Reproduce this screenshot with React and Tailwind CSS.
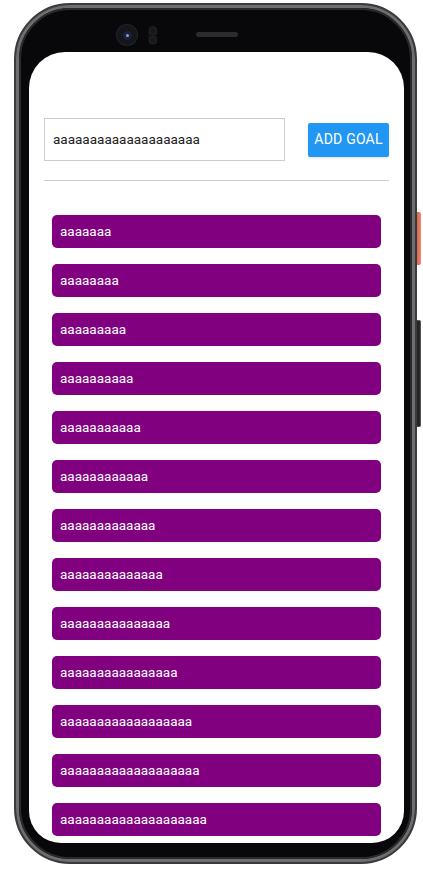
import React from "react";

const goals = [7, 8, 9, 10, 11, 12, 13, 14, 15, 16, 18, 19, 20].map((n, i) => ({ id: i, text: "a".repeat(n) }));

export default function App() {
  return (
    <div className="min-h-[876px] w-[423px] bg-white pl-[14px] pt-[3px] font-['Roboto','Liberation_Sans',sans-serif]">
      <div className="relative h-[861px] w-[403px]">
        {/* side buttons */}
        <div className="absolute left-[401px] top-[209px] h-[53px] w-[6px] rounded-r-[2px] bg-gradient-to-r from-[#c8553c] to-[#f08a6c]" />
        <div className="absolute left-[400px] top-[317px] h-[107px] w-[7px] rounded-r-[2px] border-y border-r border-[#555] bg-[#262628]" />

        <div className="relative h-full w-full rounded-[56px] border-2 border-[#3b3b3d] bg-[#111]">
          <div className="h-full w-full rounded-[54px] border-[3px] border-[#6e6e70]">
            <div className="h-full w-full rounded-[51px] border-2 border-[#2a2a2c] bg-[#08080a] pl-[8px] pr-[6px] pb-[14px]">
              {/* top bezel */}
              <div className="flex h-[42px] items-start pl-[88px] pt-[15px]">
                <div className="flex h-[20px] w-[20px] items-center justify-center rounded-full bg-[#15151b] ring-1 ring-[#22222a]">
                  <div className="flex h-[9px] w-[9px] items-center justify-center rounded-full bg-[#1c2038]">
                    <div className="h-[3px] w-[3px] rounded-full bg-[#8fa0d8]" />
                  </div>
                </div>
                <div className="ml-[11px] flex h-[20px] w-[9px] flex-col items-center justify-around rounded-full bg-[#111115] py-[1px]">
                  <div className="h-[6px] w-[6px] rounded-full bg-[#18181c] ring-1 ring-[#232328]" />
                  <div className="h-[6px] w-[6px] rounded-full bg-[#18181c] ring-1 ring-[#232328]" />
                </div>
                <div className="ml-[39px] mt-[7px] h-[5px] w-[42px] rounded-full bg-[#2c2c30]" />
              </div>

              {/* screen */}
              <div className="h-[791px] w-[375px] overflow-hidden rounded-t-[36px] rounded-b-[32px] bg-white">
                <div className="mx-[15px] mt-[66px] flex items-center justify-between border-b border-[#cccccc] pb-[19px]">
                  <div className="flex h-[43px] w-[241px] items-center border border-[#cccccc] px-[8px] text-[13.5px] text-[#222]">
                    aaaaaaaaaaaaaaaaaaaa
                  </div>
                  <button className="h-[34px] w-[81px] rounded-[2px] bg-[#2196F3] text-[14px] font-normal tracking-[0.2px] text-white shadow-sm">
                    ADD GOAL
                  </button>
                </div>
                <ul className="mx-[23px] mt-[34px] flex flex-col gap-[16px]">
                  {goals.map((g) => (
                    <li key={g.id} className="flex h-[33px] items-center rounded-[5px] bg-[#800080] px-[8px] text-[13.5px] text-white">
                      {g.text}
                    </li>
                  ))}
                </ul>
              </div>
            </div>
          </div>
        </div>
      </div>
    </div>
  );
}
